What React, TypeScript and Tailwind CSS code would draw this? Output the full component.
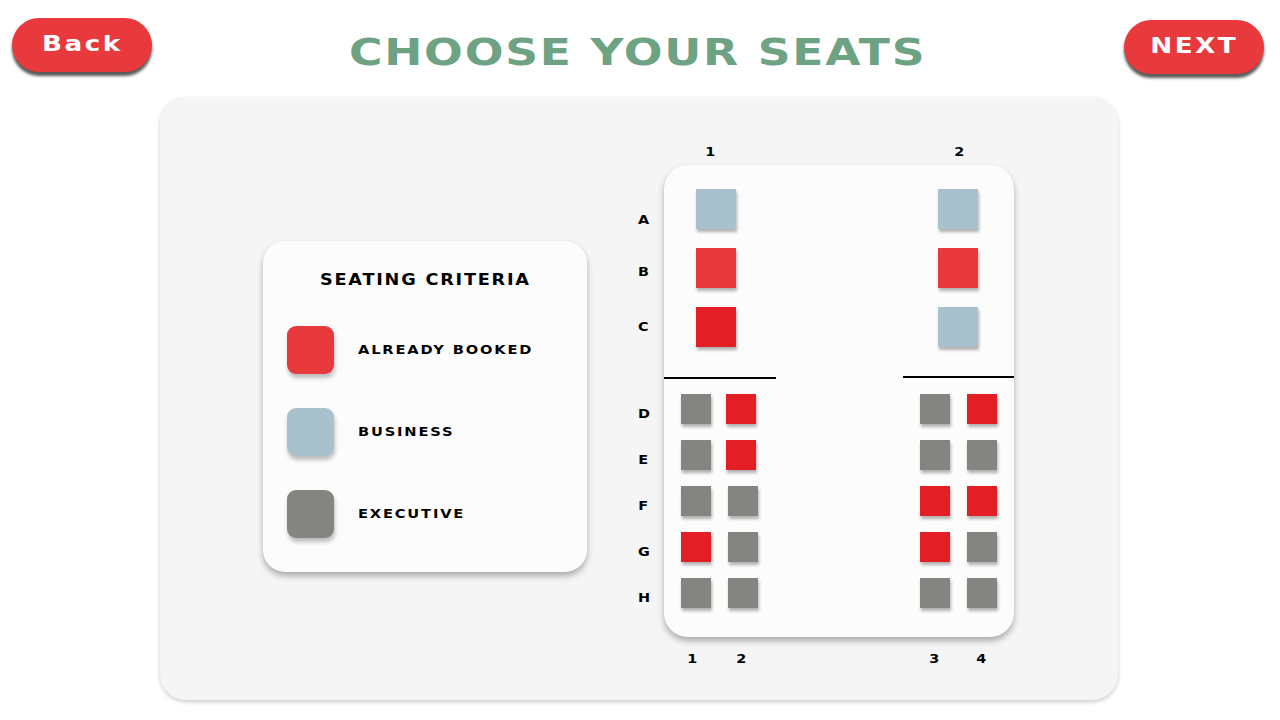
const FONT = "font-['DejaVu_Sans',sans-serif]";

type Kind = "booked" | "hot" | "business" | "exec";

const seatColor: Record<Kind, string> = {
  booked: "bg-[#e8393d]",
  hot: "bg-[#e31e24]",
  business: "bg-[#a9c1cc]",
  exec: "bg-[#848580]",
};

function Seat({ kind, big }: { kind: Kind; big?: boolean }) {
  return (
    <div
      className={`${big ? "w-[40px] h-[40px]" : "w-[30px] h-[30px]"} ${seatColor[kind]} shadow-[1px_3px_3px_rgba(0,0,0,0.3)]`}
    />
  );
}

function PillButton({ label }: { label: string }) {
  return (
    <button className="w-[140px] h-[54px] rounded-full bg-[#e8393d] shadow-[0_4px_3px_rgba(0,0,0,0.65)] flex items-center justify-center">
      <span className={`${FONT} font-bold text-white text-[21px] tracking-[2px] inline-block scale-x-[1.25]`}>{label}</span>
    </button>
  );
}

function Legend() {
  const items: { kind: Kind; label: string }[] = [
    { kind: "booked", label: "ALREADY BOOKED" },
    { kind: "business", label: "BUSINESS" },
    { kind: "exec", label: "EXECUTIVE" },
  ];
  return (
    <div className="mt-[144px] w-[324px] h-[331px] rounded-[22px] bg-[#fcfcfc] shadow-[0_4px_6px_rgba(0,0,0,0.3)] flex flex-col">
      <div className="h-[74px] pt-[28px] flex justify-center">
        <span className={`${FONT} font-bold text-[15px] text-black tracking-[1.5px] inline-block scale-x-[1.18]`}>SEATING CRITERIA</span>
      </div>
      <div className="flex flex-col gap-[34px] pl-[24px] pt-[11px]">
        {items.map(i => (
          <div key={i.label} className="flex items-center gap-[24px]">
            <div className={`w-[47px] h-[48px] rounded-[9px] ${seatColor[i.kind]} shadow-[1px_4px_4px_rgba(0,0,0,0.25)]`} />
            <span className={`${FONT} font-bold text-[12px] text-black tracking-[1.5px] inline-block origin-left scale-x-[1.22]`}>{i.label}</span>
          </div>
        ))}
      </div>
    </div>
  );
}

const business: [Kind, Kind][] = [
  ["business", "business"],
  ["booked", "booked"],
  ["hot", "business"],
];

const exec: Kind[][] = [
  ["exec", "hot", "exec", "hot"],
  ["exec", "hot", "exec", "exec"],
  ["exec", "exec", "hot", "hot"],
  ["hot", "exec", "hot", "exec"],
  ["exec", "exec", "exec", "exec"],
];

const lbl = `${FONT} font-bold text-[12px] text-black inline-block scale-x-[1.2]`;

function SeatMap() {
  return (
    <div className="ml-[49px] mt-[45px] flex flex-col">
      {/* top column numbers */}
      <div className="h-[20px] flex items-center pl-[28px]">
        <div className="w-[92px] flex justify-center"><span className={lbl}>1</span></div>
        <div className="w-[172px]" />
        <div className="w-[62px] flex justify-center"><span className={lbl}>2</span></div>
      </div>

      <div className="flex mt-[3px]">
        {/* row letters */}
        <div className="w-[28px] flex flex-col items-start pl-[3px] pt-[24px]">
          {["A", "B", "C"].map((r, i) => (
            <div key={r} className={`h-[40px] flex items-center ${i > 0 ? "mt-[19px]" : ""} ${i === 0 ? "pt-[22px]" : i === 1 ? "pt-[8px]" : ""}`}>
              <span className={lbl}>{r}</span>
            </div>
          ))}
          <div className="h-[47px]" />
          {["D", "E", "F", "G", "H"].map((r, i) => (
            <div key={r} className={`h-[30px] flex items-center ${i > 0 ? "mt-[16px]" : ""} pt-[10px]`}>
              <span className={lbl}>{r}</span>
            </div>
          ))}
        </div>

        {/* cabin */}
        <div className="w-[350px] h-[472px] rounded-[24px] bg-[#fcfcfc] shadow-[0_4px_6px_rgba(0,0,0,0.3)] flex flex-col pt-[24px]">
          <div className="flex flex-col gap-[19px]">
            {business.map((row, i) => (
              <div key={i} className="flex justify-between pl-[32px] pr-[36px]">
                <Seat kind={row[0]} big />
                <Seat kind={row[1]} big />
              </div>
            ))}
          </div>
          <div className="flex justify-between items-start mt-[29px]">
            <div className="w-[112px] h-[2px] bg-black mt-[1px]" />
            <div className="w-[111px] h-[2px] bg-black" />
          </div>
          <div className="flex flex-col gap-[16px] mt-[15px]">
            {exec.map((row, i) => (
              <div key={i} className="flex pl-[17px]">
                <Seat kind={row[0]} />
                <div className={i < 2 ? "ml-[15px]" : "ml-[17px]"}><Seat kind={row[1]} /></div>
                <div className={i < 2 ? "ml-[164px]" : "ml-[162px]"}><Seat kind={row[2]} /></div>
                <div className="ml-[17px]"><Seat kind={row[3]} /></div>
              </div>
            ))}
          </div>
        </div>
      </div>

      {/* bottom column numbers */}
      <div className="h-[20px] mt-[12px] flex items-center pl-[28px]">
        <div className="w-[56px] flex justify-center"><span className={lbl}>1</span></div>
        <div className="w-[42px] flex justify-center"><span className={lbl}>2</span></div>
        <div className="ml-[157px] w-[30px] flex justify-center"><span className={lbl}>3</span></div>
        <div className="ml-[17px] w-[30px] flex justify-center"><span className={lbl}>4</span></div>
      </div>
    </div>
  );
}

export default function App() {
  return (
    <div className="w-[1280px] h-[720px] bg-white relative overflow-hidden">
      <div className="flex items-start justify-between px-[12px] pt-[18px]">
        <PillButton label="Back" />
        <h1 className={`${FONT} font-bold text-[38px] text-[#6da283] tracking-[1.5px] mt-[15px] inline-block scale-x-[1.2] leading-none`}>
          CHOOSE YOUR SEATS
        </h1>
        <div className="mt-[2px] mr-[4px]"><PillButton label="NEXT" /></div>
      </div>

      <div className="ml-[160px] mt-[23px] w-[958px] h-[603px] rounded-[26px] bg-[#f5f5f5] shadow-[0_2px_4px_rgba(0,0,0,0.2)] flex pl-[103px]">
        <Legend />
        <SeatMap />
      </div>
    </div>
  );
}
